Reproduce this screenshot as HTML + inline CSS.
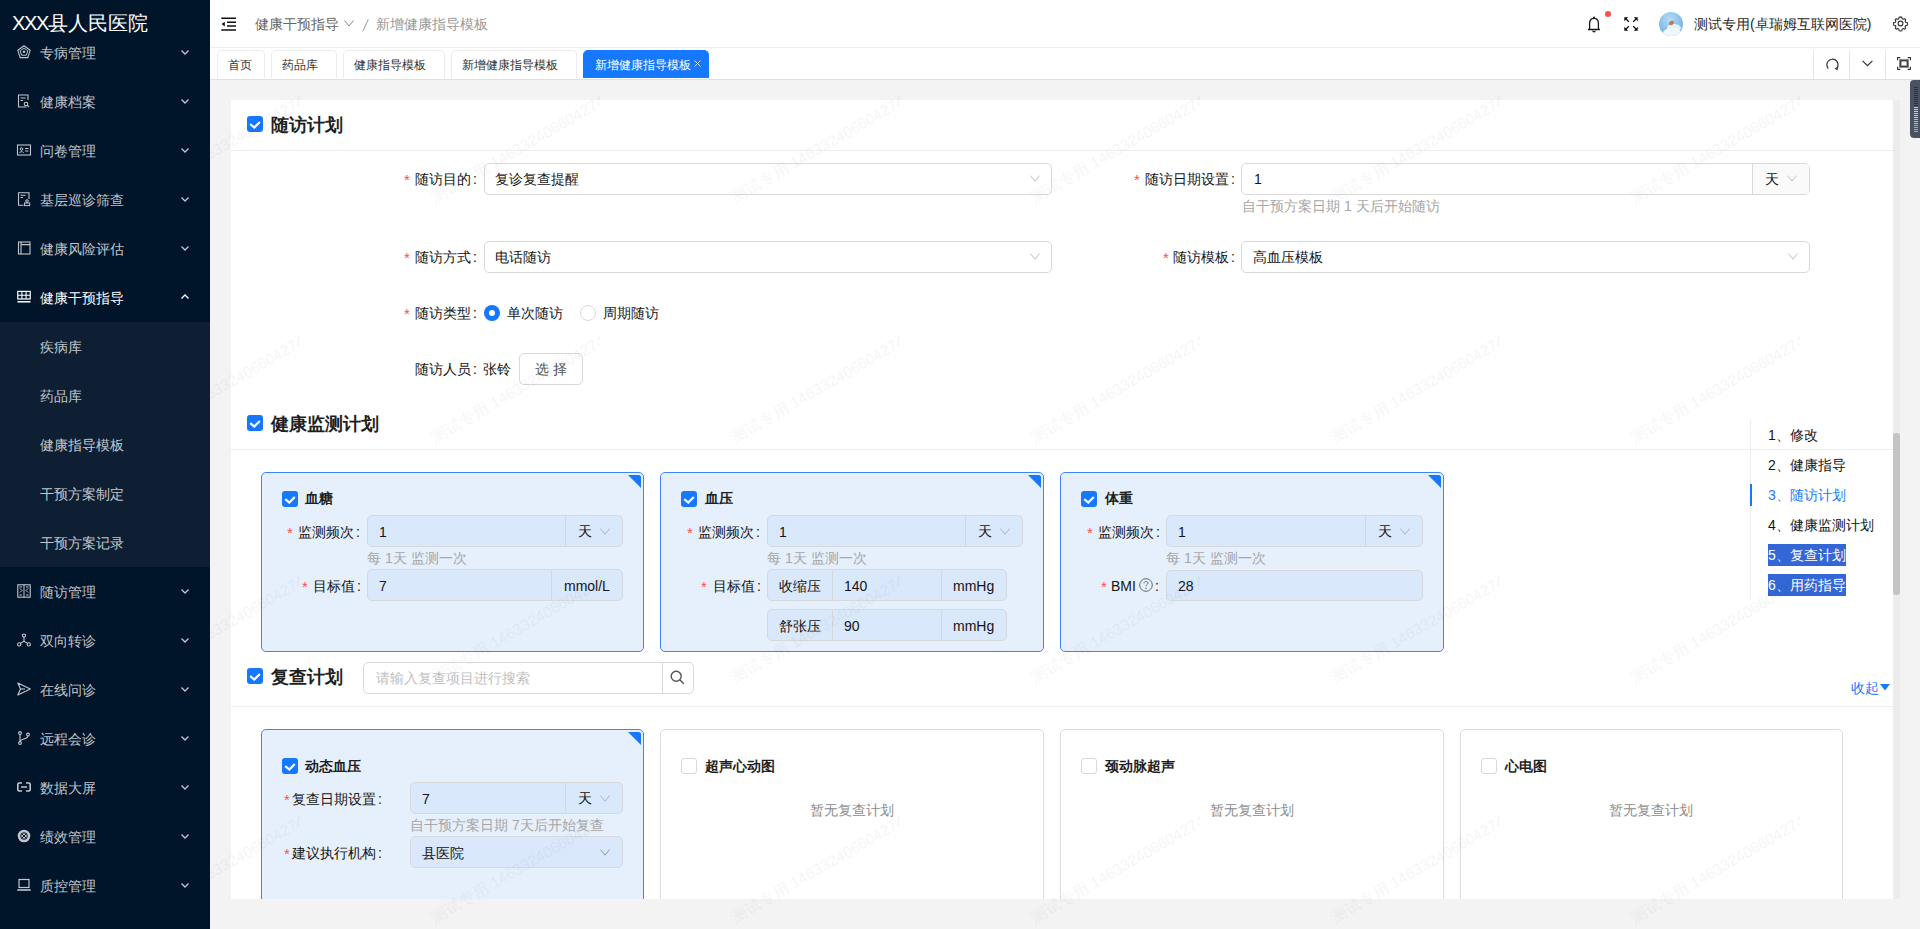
<!DOCTYPE html><html><head><meta charset="utf-8"><style>
*{box-sizing:border-box;margin:0;padding:0}
html,body{width:1920px;height:929px;overflow:hidden}
body{font-family:"Liberation Sans",sans-serif;font-size:14px;color:#262626;background:#f3f3f3;position:relative}
.a{position:absolute}
.t{position:absolute;white-space:nowrap;line-height:1}
svg{position:absolute;overflow:visible}
#side{left:0;top:0;width:210px;height:929px;background:#00142a;overflow:hidden}
.logo{left:12px;top:13px;font-size:20px;color:#fff}
.mt{position:absolute;left:40px;font-size:14px;line-height:14px;color:rgba(255,255,255,.76)}
.sub{position:absolute;left:0;top:322px;width:210px;height:245px;background:#0e1f34}
#hdr{left:210px;top:0;width:1710px;height:48px;background:#fff;border-bottom:1px solid #ececec}
#tabs{left:210px;top:48px;width:1710px;height:32px;background:#fff;border-bottom:1px solid #e0e0e0}
.tab{position:absolute;top:2px;height:28px;border:1px solid #ececec;border-bottom:none;border-radius:5px 5px 0 0;font-size:12px;color:#333;line-height:28px;text-align:center;background:#fff}
.tab.on{background:#1677ff;border-color:#1677ff;color:#fff}
#panel{left:231px;top:100px;width:1662px;height:799px;background:#fff;overflow:hidden}
.lbl{position:absolute;font-size:14px;line-height:14px;color:#141414;white-space:nowrap}
.req{color:#ff4d4f;font-family:"Liberation Sans",sans-serif;margin-right:4px}
.inp{position:absolute;height:32px;border:1px solid #d9d9d9;border-radius:5px;background:#fff}
.val{position:absolute;font-size:14px;line-height:14px;color:#141414;white-space:nowrap}
.help{position:absolute;font-size:14px;line-height:14px;color:#a6a6a6;white-space:nowrap}
.cb{position:absolute;width:16px;height:16px;border-radius:3px;background:#1677ff}
.cb.off{background:#fff;border:1px solid #d9d9d9}
.card{position:absolute;border:1.5px solid #3d84f7;border-radius:5px;background:#e6f0fd}
.card.off{border:1px solid #dcdcdc;background:#fff}
.h1{position:absolute;font-size:18px;line-height:18px;font-weight:bold;color:#1f1f1f;white-space:nowrap}
.h2{position:absolute;font-size:14px;line-height:14px;font-weight:bold;color:#1f1f1f;white-space:nowrap}
.ci{position:absolute;height:32px;border:1px solid #d6d8dc;border-radius:5px;background:#dae8fc}
.div{position:absolute;left:0;width:1662px;height:1px;background:#efefef}
</style></head><body>
<div id="side" class="a">
<div class="t logo"><span style="letter-spacing:-1.4px">XXX</span>县人民医院</div>
<div class="sub"></div>
<div class="mt" style="top:46px;color:rgba(255,255,255,.76)">专病管理</div>
<svg style="left:17px;top:45px" width="14" height="14" viewBox="0 0 14 14"><path d="M7 0.8L13.2 5.3L10.8 12.6H3.2L0.8 5.3Z" fill="none" stroke="rgba(255,255,255,.76)" stroke-width="1.1"/><path d="M7 3L10.8 5.8L9.4 10.2H4.6L3.2 5.8Z" fill="none" stroke="rgba(255,255,255,.76)" stroke-width="1"/><circle cx="7" cy="6.8" r="1.3" fill="rgba(255,255,255,.76)"/></svg>
<svg style="left:181px;top:50px" width="8" height="5" viewBox="0 0 8 5"><path d="M0.5 0.5L4 4L7.5 0.5" fill="none" stroke="rgba(255,255,255,.76)" stroke-width="1.3"/></svg>
<div class="mt" style="top:95px;color:rgba(255,255,255,.76)">健康档案</div>
<svg style="left:17px;top:94px" width="14" height="14" viewBox="0 0 14 14"><path d="M9.5 13H1.5V1H11V6" fill="none" stroke="rgba(255,255,255,.76)" stroke-width="1.1"/><path d="M3.5 4H8.5M3.5 6.5H6" stroke="rgba(255,255,255,.76)" stroke-width="1.1"/><circle cx="9" cy="10" r="1.8" fill="none" stroke="rgba(255,255,255,.76)" stroke-width="1.1"/><path d="M10.3 11.3L12 13" stroke="rgba(255,255,255,.76)" stroke-width="1.1"/></svg>
<svg style="left:181px;top:99px" width="8" height="5" viewBox="0 0 8 5"><path d="M0.5 0.5L4 4L7.5 0.5" fill="none" stroke="rgba(255,255,255,.76)" stroke-width="1.3"/></svg>
<div class="mt" style="top:144px;color:rgba(255,255,255,.76)">问卷管理</div>
<svg style="left:17px;top:143px" width="14" height="14" viewBox="0 0 14 14"><rect x="0.5" y="2" width="13" height="10" fill="none" stroke="rgba(255,255,255,.76)" stroke-width="1.1"/><circle cx="4.5" cy="6" r="1.3" fill="none" stroke="rgba(255,255,255,.76)" stroke-width="1"/><path d="M2.5 9.8C3 8.3 6 8.3 6.5 9.8M8 5.5H11.5M8 8H11.5" fill="none" stroke="rgba(255,255,255,.76)" stroke-width="1"/></svg>
<svg style="left:181px;top:148px" width="8" height="5" viewBox="0 0 8 5"><path d="M0.5 0.5L4 4L7.5 0.5" fill="none" stroke="rgba(255,255,255,.76)" stroke-width="1.3"/></svg>
<div class="mt" style="top:193px;color:rgba(255,255,255,.76)">基层巡诊筛查</div>
<svg style="left:17px;top:192px" width="14" height="14" viewBox="0 0 14 14"><path d="M6.5 13.3H1.5V0.8H12V7" fill="none" stroke="rgba(255,255,255,.76)" stroke-width="1.1"/><path d="M3.5 3.3H8.5M3.5 5.5H6" stroke="rgba(255,255,255,.76)" stroke-width="1"/><circle cx="10" cy="9" r="1.3" fill="none" stroke="rgba(255,255,255,.76)" stroke-width="1"/><rect x="7.5" y="11" width="5.2" height="2.6" fill="none" stroke="rgba(255,255,255,.76)" stroke-width="1"/></svg>
<svg style="left:181px;top:197px" width="8" height="5" viewBox="0 0 8 5"><path d="M0.5 0.5L4 4L7.5 0.5" fill="none" stroke="rgba(255,255,255,.76)" stroke-width="1.3"/></svg>
<div class="mt" style="top:242px;color:rgba(255,255,255,.76)">健康风险评估</div>
<svg style="left:17px;top:241px" width="14" height="14" viewBox="0 0 14 14"><rect x="1.5" y="1" width="11.5" height="12" fill="none" stroke="rgba(255,255,255,.76)" stroke-width="1.1"/><path d="M4 1V13M4 3.6H13" stroke="rgba(255,255,255,.76)" stroke-width="1.1"/></svg>
<svg style="left:181px;top:246px" width="8" height="5" viewBox="0 0 8 5"><path d="M0.5 0.5L4 4L7.5 0.5" fill="none" stroke="rgba(255,255,255,.76)" stroke-width="1.3"/></svg>
<div class="mt" style="top:291px;color:#fff">健康干预指导</div>
<svg style="left:17px;top:290px" width="14" height="14" viewBox="0 0 14 14"><rect x="0.8" y="1.4" width="12.4" height="7.6" fill="none" stroke="#fff" stroke-width="1.2"/><path d="M0.8 5.2H13.2M4.9 1.4V9M9.1 1.4V9" stroke="#fff" stroke-width="1.1"/><path d="M0.5 11.8H13.5" stroke="#fff" stroke-width="1.5"/></svg>
<svg style="left:181px;top:294px" width="8" height="5" viewBox="0 0 8 5"><path d="M0.5 4.5L4 1L7.5 4.5" fill="none" stroke="#fff" stroke-width="1.3"/></svg>
<div class="mt" style="top:340px">疾病库</div>
<div class="mt" style="top:389px">药品库</div>
<div class="mt" style="top:438px">健康指导模板</div>
<div class="mt" style="top:487px">干预方案制定</div>
<div class="mt" style="top:536px">干预方案记录</div>
<div class="mt" style="top:585px;color:rgba(255,255,255,.76)">随访管理</div>
<svg style="left:17px;top:584px" width="14" height="14" viewBox="0 0 14 14"><rect x="0.8" y="0.8" width="12.4" height="12.4" fill="none" stroke="rgba(255,255,255,.76)" stroke-width="1.1"/><path d="M7 0.8V13.2M3 4.5L5 6.5L3 8.5M11 4.5L9 6.5L11 8.5M2.5 3H5M9 3H11.5M2.5 11H5M9 11H11.5" fill="none" stroke="rgba(255,255,255,.76)" stroke-width="1"/></svg>
<svg style="left:181px;top:589px" width="8" height="5" viewBox="0 0 8 5"><path d="M0.5 0.5L4 4L7.5 0.5" fill="none" stroke="rgba(255,255,255,.76)" stroke-width="1.3"/></svg>
<div class="mt" style="top:634px;color:rgba(255,255,255,.76)">双向转诊</div>
<svg style="left:17px;top:633px" width="14" height="14" viewBox="0 0 14 14"><circle cx="7" cy="2.6" r="1.6" fill="none" stroke="rgba(255,255,255,.76)" stroke-width="1.1"/><circle cx="2.2" cy="11.4" r="1.6" fill="none" stroke="rgba(255,255,255,.76)" stroke-width="1.1"/><circle cx="11.8" cy="11.4" r="1.6" fill="none" stroke="rgba(255,255,255,.76)" stroke-width="1.1"/><path d="M7 4.2V8.2M7 8.2L3.4 10.4M7 8.2L10.6 10.4" fill="none" stroke="rgba(255,255,255,.76)" stroke-width="1.1"/></svg>
<svg style="left:181px;top:638px" width="8" height="5" viewBox="0 0 8 5"><path d="M0.5 0.5L4 4L7.5 0.5" fill="none" stroke="rgba(255,255,255,.76)" stroke-width="1.3"/></svg>
<div class="mt" style="top:683px;color:rgba(255,255,255,.76)">在线问诊</div>
<svg style="left:17px;top:682px" width="14" height="14" viewBox="0 0 14 14"><path d="M0.8 1L13.3 7L0.8 13L3.5 7Z" fill="none" stroke="rgba(255,255,255,.76)" stroke-width="1.1" stroke-linejoin="round"/><path d="M3.5 7H8" stroke="rgba(255,255,255,.76)" stroke-width="1.1"/></svg>
<svg style="left:181px;top:687px" width="8" height="5" viewBox="0 0 8 5"><path d="M0.5 0.5L4 4L7.5 0.5" fill="none" stroke="rgba(255,255,255,.76)" stroke-width="1.3"/></svg>
<div class="mt" style="top:732px;color:rgba(255,255,255,.76)">远程会诊</div>
<svg style="left:17px;top:731px" width="14" height="14" viewBox="0 0 14 14"><circle cx="3" cy="2" r="1.4" fill="none" stroke="rgba(255,255,255,.76)" stroke-width="1.1"/><circle cx="3" cy="12" r="1.4" fill="none" stroke="rgba(255,255,255,.76)" stroke-width="1.1"/><circle cx="11" cy="3.5" r="1.4" fill="none" stroke="rgba(255,255,255,.76)" stroke-width="1.1"/><path d="M3 3.4V10.6M11 4.9C11 8.5 3 7.5 3 10.6" fill="none" stroke="rgba(255,255,255,.76)" stroke-width="1.1"/></svg>
<svg style="left:181px;top:736px" width="8" height="5" viewBox="0 0 8 5"><path d="M0.5 0.5L4 4L7.5 0.5" fill="none" stroke="rgba(255,255,255,.76)" stroke-width="1.3"/></svg>
<div class="mt" style="top:781px;color:rgba(255,255,255,.76)">数据大屏</div>
<svg style="left:17px;top:780px" width="14" height="14" viewBox="0 0 14 14"><path d="M5 3H2.2C1.4 3 0.8 3.6 0.8 4.4V9.6C0.8 10.4 1.4 11 2.2 11H5M9 3H11.8C12.6 3 13.2 3.6 13.2 4.4V9.6C13.2 10.4 12.6 11 11.8 11H9M4 7H10" fill="none" stroke="rgba(255,255,255,.76)" stroke-width="1.6"/></svg>
<svg style="left:181px;top:785px" width="8" height="5" viewBox="0 0 8 5"><path d="M0.5 0.5L4 4L7.5 0.5" fill="none" stroke="rgba(255,255,255,.76)" stroke-width="1.3"/></svg>
<div class="mt" style="top:830px;color:rgba(255,255,255,.76)">绩效管理</div>
<svg style="left:17px;top:829px" width="14" height="14" viewBox="0 0 14 14"><circle cx="7" cy="7" r="6.3" fill="rgba(255,255,255,.76)"/><circle cx="7" cy="7" r="3.3" fill="none" stroke="#00142a" stroke-width="1"/><path d="M4.8 4.8L9.2 9.2M9.2 4.8L4.8 9.2" stroke="#00142a" stroke-width="1"/></svg>
<svg style="left:181px;top:834px" width="8" height="5" viewBox="0 0 8 5"><path d="M0.5 0.5L4 4L7.5 0.5" fill="none" stroke="rgba(255,255,255,.76)" stroke-width="1.3"/></svg>
<div class="mt" style="top:879px;color:rgba(255,255,255,.76)">质控管理</div>
<svg style="left:17px;top:878px" width="14" height="14" viewBox="0 0 14 14"><rect x="2" y="1.5" width="10" height="8" fill="none" stroke="rgba(255,255,255,.76)" stroke-width="1.2"/><path d="M0.3 12H13.7" stroke="rgba(255,255,255,.76)" stroke-width="1.6"/></svg>
<svg style="left:181px;top:883px" width="8" height="5" viewBox="0 0 8 5"><path d="M0.5 0.5L4 4L7.5 0.5" fill="none" stroke="rgba(255,255,255,.76)" stroke-width="1.3"/></svg>
</div>
<div id="hdr" class="a">
<svg style="left:11px;top:17px" width="15" height="14" viewBox="0 0 15 14"><path d="M0.3 1.3H15M6 5.3H15M6 8.9H15M0.3 12.9H15" stroke="#111" stroke-width="1.5"/><path d="M0.6 7.1L3.8 4.7V9.5Z" fill="#111"/></svg>
<div class="t" style="left:45px;top:17px;color:#666">健康干预指导</div>
<svg style="left:134px;top:20px" width="10" height="7" viewBox="0 0 10 7"><path d="M0.5 0.5L5 6L9.5 0.5" fill="none" stroke="#888" stroke-width="1"/></svg>
<svg style="left:152px;top:19px" width="7" height="13" viewBox="0 0 7 13"><path d="M0.8 12.3L6.3 0.3" stroke="#999" stroke-width="1"/></svg>
<div class="t" style="left:166px;top:17px;color:#999">新增健康指导模板</div>
<svg style="left:1376px;top:15px" width="16" height="18" viewBox="0 0 16 18"><path d="M3.6 14.4V8.6C3.6 5.4 5.5 3.4 8 3.4C10.5 3.4 12.4 5.4 12.4 8.6V14.4" fill="none" stroke="#1a1a1a" stroke-width="1.3"/><path d="M2 14.5H14" stroke="#1a1a1a" stroke-width="1.5"/><circle cx="8" cy="2.4" r="1" fill="#1a1a1a"/><path d="M6.7 15.6A1.3 1.3 0 0 0 9.3 15.6" fill="none" stroke="#1a1a1a" stroke-width="1.1"/></svg>
<div class="a" style="left:1395px;top:11px;width:6px;height:6px;border-radius:3px;background:#ff4d4f"></div>
<svg style="left:1414px;top:17px" width="14" height="14" viewBox="0 0 14 14"><path d="M1.5 1.5L4.8 4.8M12.5 1.5L9.2 4.8M1.5 12.5L4.8 9.2M12.5 12.5L9.2 9.2" stroke="#111" stroke-width="1.3"/><path d="M0.3 0.3H4.3L0.3 4.3ZM13.7 0.3H9.7L13.7 4.3ZM0.3 13.7H4.3L0.3 9.7ZM13.7 13.7H9.7L13.7 9.7Z" fill="#111"/></svg>
<div class="a" style="left:1449px;top:12px;width:24px;height:24px;border-radius:12px;overflow:hidden;background:radial-gradient(circle at 45% 30%,#b9dcf3 0,#8cc3ea 45%,#5ea6dd 100%)"><div class="a" style="left:8px;top:12px;width:14px;height:8px;border-radius:50%;background:#e6f3fb"></div><div class="a" style="left:4px;top:16px;width:18px;height:10px;border-radius:50%;background:#f0f8fd"></div><div class="a" style="left:10px;top:9px;width:5px;height:4px;background:#c07a50;border-radius:2px;transform:rotate(-25deg)"></div></div>
<div class="t" style="left:1484px;top:17px;color:#262626">测试专用(卓瑞姆互联网医院)</div>
<svg style="left:1683px;top:16px" width="15" height="15" viewBox="0 0 24 24"><path d="M12 1.5l2.1 0.3 0.6 2.6 1.6 0.9 2.5-0.9 1.5 1.5-0.9 2.5 0.9 1.6 2.6 0.6 0.3 2.1-0.3 2.1-2.6 0.6-0.9 1.6 0.9 2.5-1.5 1.5-2.5-0.9-1.6 0.9-0.6 2.6-2.1 0.3-2.1-0.3-0.6-2.6-1.6-0.9-2.5 0.9-1.5-1.5 0.9-2.5-0.9-1.6-2.6-0.6-0.3-2.1 0.3-2.1 2.6-0.6 0.9-1.6-0.9-2.5 1.5-1.5 2.5 0.9 1.6-0.9 0.6-2.6z" fill="none" stroke="#333" stroke-width="1.8" stroke-linejoin="round"/><circle cx="12" cy="12" r="3.8" fill="none" stroke="#333" stroke-width="1.8"/></svg>
</div>
<div id="tabs" class="a">
<div class="tab" style="left:7px;width:48px;text-align:left;padding-left:10px">首页</div>
<div class="tab" style="left:61px;width:66px;text-align:left;padding-left:10px">药品库</div>
<div class="tab" style="left:133px;width:102px;text-align:left;padding-left:10px">健康指导模板</div>
<div class="tab" style="left:241px;width:126px;text-align:left;padding-left:10px">新增健康指导模板</div>
<div class="tab on" style="left:373px;width:126px;text-align:left;padding-left:11px">新增健康指导模板</div>
<svg style="left:484px;top:12px" width="7" height="7" viewBox="0 0 7 7"><path d="M0.5 0.5L6.5 6.5M6.5 0.5L0.5 6.5" stroke="rgba(255,255,255,.85)" stroke-width="0.9"/></svg>
<div class="a" style="left:1603px;top:2px;width:1px;height:29px;background:#e6e6e6"></div>
<div class="a" style="left:1639px;top:2px;width:1px;height:29px;background:#e6e6e6"></div>
<div class="a" style="left:1675px;top:2px;width:1px;height:29px;background:#e6e6e6"></div>
<svg style="left:1616px;top:10px" width="13" height="13" viewBox="0 0 13 13"><path d="M2.3 10.6A5.6 5.6 0 1 1 10.9 10.2" fill="none" stroke="#333" stroke-width="1.2"/><path d="M8.6 10.6L11.8 12.4L11.6 8.8Z" fill="#333"/></svg>
<svg style="left:1652px;top:12px" width="11" height="7" viewBox="0 0 11 7"><path d="M0.6 0.8L5.5 5.7L10.4 0.8" fill="none" stroke="#333" stroke-width="1.2"/></svg>
<svg style="left:1687px;top:9px" width="14" height="13" viewBox="0 0 14 13"><path d="M0.6 3.3V0.6H3.3M10.7 0.6H13.4V3.3M13.4 9.7V12.4H10.7M3.3 12.4H0.6V9.7" fill="none" stroke="#333" stroke-width="1.1"/><rect x="3.4" y="3.4" width="7.2" height="6.2" fill="none" stroke="#444" stroke-width="2.1"/></svg>
</div>
<div id="panel" class="a">
<div class="cb" style="left:16px;top:16px"></div>
<svg style="left:16px;top:16px" width="16" height="16" viewBox="0 0 16 16"><path d="M3.2 8.2L7.3 11.6L12.8 5.9" fill="none" stroke="#fff" stroke-width="2.2"/></svg>
<div class="h1" style="left:40px;top:16px;">随访计划</div>
<div class="div" style="top:50px"></div>
<div class="lbl" style="left:173px;top:73px;color:#ff4d4f;font-size:15px">*</div>
<div class="lbl" style="left:184px;top:72px">随访目的<span style="margin-left:2px">:</span></div>
<div class="inp" style="left:253px;top:63px;width:568px;height:32px;"></div>
<div class="val" style="left:264px;top:72px;">复诊复查提醒</div>
<svg style="left:799px;top:75px" width="10" height="7" viewBox="0 0 10 7"><path d="M0.5 0.6L5 6.2L9.5 0.6" fill="none" stroke="#bfbfbf" stroke-width="1"/></svg>
<div class="lbl" style="left:903px;top:73px;color:#ff4d4f;font-size:15px">*</div>
<div class="lbl" style="left:914px;top:72px">随访日期设置<span style="margin-left:2px">:</span></div>
<div class="inp" style="left:1010px;top:63px;width:569px;height:32px;"></div>
<div class="a" style="left:1521px;top:64px;width:1px;height:30px;background:#d9d9d9"></div>
<div class="a" style="left:1522px;top:64px;width:56px;height:30px;background:#fafafa;border-radius:0 3px 3px 0"></div>
<div class="val" style="left:1023px;top:72px;">1</div>
<div class="val" style="left:1534px;top:72px;">天</div>
<svg style="left:1556px;top:75px" width="10" height="7" viewBox="0 0 10 7"><path d="M0.5 0.6L5 6.2L9.5 0.6" fill="none" stroke="#bfbfbf" stroke-width="1"/></svg>
<div class="help" style="left:1011px;top:99px;">自干预方案日期 1 天后开始随访</div>
<div class="lbl" style="left:173px;top:151px;color:#ff4d4f;font-size:15px">*</div>
<div class="lbl" style="left:184px;top:150px">随访方式<span style="margin-left:2px">:</span></div>
<div class="inp" style="left:253px;top:141px;width:568px;height:32px;"></div>
<div class="val" style="left:264px;top:150px;">电话随访</div>
<svg style="left:799px;top:153px" width="10" height="7" viewBox="0 0 10 7"><path d="M0.5 0.6L5 6.2L9.5 0.6" fill="none" stroke="#bfbfbf" stroke-width="1"/></svg>
<div class="lbl" style="left:932px;top:151px;color:#ff4d4f;font-size:15px">*</div>
<div class="lbl" style="left:942px;top:150px">随访模板<span style="margin-left:2px">:</span></div>
<div class="inp" style="left:1010px;top:141px;width:569px;height:32px;"></div>
<div class="val" style="left:1022px;top:150px;">高血压模板</div>
<svg style="left:1557px;top:153px" width="10" height="7" viewBox="0 0 10 7"><path d="M0.5 0.6L5 6.2L9.5 0.6" fill="none" stroke="#bfbfbf" stroke-width="1"/></svg>
<div class="lbl" style="left:173px;top:207px;color:#ff4d4f;font-size:15px">*</div>
<div class="lbl" style="left:184px;top:206px">随访类型<span style="margin-left:2px">:</span></div>
<div class="a" style="left:253px;top:205px;width:16px;height:16px;border-radius:8px;background:#1677ff"></div>
<div class="a" style="left:258px;top:210px;width:6px;height:6px;border-radius:3px;background:#fff"></div>
<div class="val" style="left:276px;top:206px;">单次随访</div>
<div class="a" style="left:349px;top:205px;width:16px;height:16px;border-radius:8px;border:1px solid #d9d9d9;background:#fff"></div>
<div class="val" style="left:372px;top:206px;">周期随访</div>
<div class="lbl" style="left:184px;top:262px">随访人员<span style="margin-left:2px">:</span></div>
<div class="val" style="left:252px;top:262px;">张铃</div>
<div class="inp" style="left:288px;top:253px;width:64px;height:32px;"></div>
<div class="val" style="left:304px;top:262px;color:#555">选 择</div>
<div class="cb" style="left:16px;top:315px"></div>
<svg style="left:16px;top:315px" width="16" height="16" viewBox="0 0 16 16"><path d="M3.2 8.2L7.3 11.6L12.8 5.9" fill="none" stroke="#fff" stroke-width="2.2"/></svg>
<div class="h1" style="left:40px;top:315px;">健康监测计划</div>
<div class="div" style="top:349px"></div>
<div class="card" style="left:30px;top:372px;width:383px;height:180px;"></div>
<svg style="left:397px;top:375px" width="13" height="13" viewBox="0 0 13 13"><path d="M0 0H10.5Q13 0 13 2.5V13Z" fill="#1677ff"/></svg>
<div class="cb" style="left:51px;top:391px"></div>
<svg style="left:51px;top:391px" width="16" height="16" viewBox="0 0 16 16"><path d="M3.2 8.2L7.3 11.6L12.8 5.9" fill="none" stroke="#fff" stroke-width="2.2"/></svg>
<div class="h2" style="left:74px;top:391px;">血糖</div>
<div class="lbl" style="left:56px;top:426px;color:#ff4d4f;font-size:15px">*</div>
<div class="lbl" style="left:67px;top:425px">监测频次<span style="margin-left:2px">:</span></div>
<div class="ci" style="left:136px;top:415px;width:256px;height:32px;"></div>
<div class="a" style="left:334px;top:416px;width:1px;height:30px;background:#d6d8dc"></div>
<div class="val" style="left:148px;top:425px;">1</div>
<div class="val" style="left:347px;top:424px;">天</div>
<svg style="left:369px;top:428px" width="10" height="7" viewBox="0 0 10 7"><path d="M0.5 0.6L5 6.2L9.5 0.6" fill="none" stroke="#a8b4c4" stroke-width="1"/></svg>
<div class="help" style="left:136px;top:451px;">每 1天 监测一次</div>
<div class="lbl" style="left:71px;top:480px;color:#ff4d4f;font-size:15px">*</div>
<div class="lbl" style="left:82px;top:479px">目标值<span style="margin-left:2px">:</span></div>
<div class="ci" style="left:136px;top:469px;width:256px;height:32px;"></div>
<div class="a" style="left:320px;top:470px;width:1px;height:30px;background:#d6d8dc"></div>
<div class="val" style="left:148px;top:479px;">7</div>
<div class="val" style="left:333px;top:479px;">mmol/L</div>
<div class="card" style="left:429px;top:372px;width:384px;height:180px;"></div>
<svg style="left:797px;top:375px" width="13" height="13" viewBox="0 0 13 13"><path d="M0 0H10.5Q13 0 13 2.5V13Z" fill="#1677ff"/></svg>
<div class="cb" style="left:450px;top:391px"></div>
<svg style="left:450px;top:391px" width="16" height="16" viewBox="0 0 16 16"><path d="M3.2 8.2L7.3 11.6L12.8 5.9" fill="none" stroke="#fff" stroke-width="2.2"/></svg>
<div class="h2" style="left:474px;top:391px;">血压</div>
<div class="lbl" style="left:456px;top:426px;color:#ff4d4f;font-size:15px">*</div>
<div class="lbl" style="left:467px;top:425px">监测频次<span style="margin-left:2px">:</span></div>
<div class="ci" style="left:536px;top:415px;width:256px;height:32px;"></div>
<div class="a" style="left:734px;top:416px;width:1px;height:30px;background:#d6d8dc"></div>
<div class="val" style="left:548px;top:425px;">1</div>
<div class="val" style="left:747px;top:424px;">天</div>
<svg style="left:769px;top:428px" width="10" height="7" viewBox="0 0 10 7"><path d="M0.5 0.6L5 6.2L9.5 0.6" fill="none" stroke="#a8b4c4" stroke-width="1"/></svg>
<div class="help" style="left:536px;top:451px;">每 1天 监测一次</div>
<div class="lbl" style="left:470px;top:480px;color:#ff4d4f;font-size:15px">*</div>
<div class="lbl" style="left:482px;top:479px">目标值<span style="margin-left:2px">:</span></div>
<div class="ci" style="left:536px;top:469px;width:240px;height:32px;"></div>
<div class="a" style="left:601px;top:470px;width:1px;height:30px;background:#d6d8dc"></div>
<div class="a" style="left:710px;top:470px;width:1px;height:30px;background:#d6d8dc"></div>
<div class="val" style="left:548px;top:479px;">收缩压</div>
<div class="val" style="left:613px;top:479px;">140</div>
<div class="val" style="left:722px;top:479px;">mmHg</div>
<div class="ci" style="left:536px;top:509px;width:240px;height:32px;"></div>
<div class="a" style="left:601px;top:510px;width:1px;height:30px;background:#d6d8dc"></div>
<div class="a" style="left:710px;top:510px;width:1px;height:30px;background:#d6d8dc"></div>
<div class="val" style="left:548px;top:519px;">舒张压</div>
<div class="val" style="left:613px;top:519px;">90</div>
<div class="val" style="left:722px;top:519px;">mmHg</div>
<div class="card" style="left:829px;top:372px;width:384px;height:180px;"></div>
<svg style="left:1197px;top:375px" width="13" height="13" viewBox="0 0 13 13"><path d="M0 0H10.5Q13 0 13 2.5V13Z" fill="#1677ff"/></svg>
<div class="cb" style="left:850px;top:391px"></div>
<svg style="left:850px;top:391px" width="16" height="16" viewBox="0 0 16 16"><path d="M3.2 8.2L7.3 11.6L12.8 5.9" fill="none" stroke="#fff" stroke-width="2.2"/></svg>
<div class="h2" style="left:874px;top:391px;">体重</div>
<div class="lbl" style="left:856px;top:426px;color:#ff4d4f;font-size:15px">*</div>
<div class="lbl" style="left:867px;top:425px">监测频次<span style="margin-left:2px">:</span></div>
<div class="ci" style="left:935px;top:415px;width:257px;height:32px;"></div>
<div class="a" style="left:1134px;top:416px;width:1px;height:30px;background:#d6d8dc"></div>
<div class="val" style="left:947px;top:425px;">1</div>
<div class="val" style="left:1147px;top:424px;">天</div>
<svg style="left:1169px;top:428px" width="10" height="7" viewBox="0 0 10 7"><path d="M0.5 0.6L5 6.2L9.5 0.6" fill="none" stroke="#a8b4c4" stroke-width="1"/></svg>
<div class="help" style="left:935px;top:451px;">每 1天 监测一次</div>
<div class="lbl" style="left:870px;top:480px;color:#ff4d4f;font-size:15px">*</div>
<div class="lbl" style="left:880px;top:479px">BMI</div>
<svg style="left:908px;top:478px" width="14" height="14" viewBox="0 0 14 14"><circle cx="7" cy="7" r="6.3" fill="none" stroke="#666" stroke-width="1"/><path d="M5 5.3C5 4 6 3.5 7 3.5C8 3.5 9 4.1 9 5.2C9 6.5 7 6.6 7 8.2" fill="none" stroke="#666" stroke-width="1"/><circle cx="7" cy="10.3" r="0.7" fill="#666"/></svg>
<div class="lbl" style="left:924px;top:479px;">:</div>
<div class="ci" style="left:935px;top:470px;width:257px;height:31px;"></div>
<div class="val" style="left:947px;top:479px;">28</div>
<div class="a" style="left:1519px;top:320px;width:1px;height:180px;background:#eeeeee"></div>
<div class="a" style="left:1519px;top:384px;width:2px;height:22px;background:#1677ff"></div>
<div class="val" style="left:1537px;top:328px;">1、修改</div>
<div class="val" style="left:1537px;top:358px;">2、健康指导</div>
<div class="val" style="left:1537px;top:388px;color:#1677ff">3、随访计划</div>
<div class="val" style="left:1537px;top:418px;">4、健康监测计划</div>
<div class="a" style="left:1537px;top:444px;width:78px;height:22px;background:#3367d6"></div>
<div class="val" style="left:1537px;top:448px;color:#fff">5、复查计划</div>
<div class="a" style="left:1537px;top:474px;width:78px;height:22px;background:#3367d6"></div>
<div class="val" style="left:1537px;top:478px;color:#fff">6、用药指导</div>
<div class="val" style="left:1620px;top:581px;color:#1677ff">收起</div>
<svg style="left:1649px;top:584px" width="10" height="7" viewBox="0 0 10 7"><path d="M0 0H10L5 6.5Z" fill="#1677ff"/></svg>
<div class="cb" style="left:16px;top:568px"></div>
<svg style="left:16px;top:568px" width="16" height="16" viewBox="0 0 16 16"><path d="M3.2 8.2L7.3 11.6L12.8 5.9" fill="none" stroke="#fff" stroke-width="2.2"/></svg>
<div class="h1" style="left:40px;top:568px;">复查计划</div>
<div class="inp" style="left:132px;top:562px;width:331px;height:32px;"></div>
<div class="a" style="left:431px;top:563px;width:1px;height:30px;background:#d9d9d9"></div>
<div class="help" style="left:145px;top:571px;color:#bfbfbf">请输入复查项目进行搜索</div>
<svg style="left:439px;top:570px" width="15" height="15" viewBox="0 0 15 15"><circle cx="6.2" cy="6.2" r="5" fill="none" stroke="#555" stroke-width="1.4"/><path d="M9.8 9.8L13.8 13.8" stroke="#555" stroke-width="1.5"/></svg>
<div class="div" style="top:606px"></div>
<div class="card" style="left:30px;top:629px;width:383px;height:231px;"></div>
<svg style="left:397px;top:632px" width="13" height="13" viewBox="0 0 13 13"><path d="M0 0H10.5Q13 0 13 2.5V13Z" fill="#1677ff"/></svg>
<div class="cb" style="left:51px;top:658px"></div>
<svg style="left:51px;top:658px" width="16" height="16" viewBox="0 0 16 16"><path d="M3.2 8.2L7.3 11.6L12.8 5.9" fill="none" stroke="#fff" stroke-width="2.2"/></svg>
<div class="h2" style="left:74px;top:659px;">动态血压</div>
<div class="lbl" style="left:53px;top:693px;color:#ff4d4f;font-size:15px">*</div>
<div class="lbl" style="left:61px;top:692px">复查日期设置<span style="margin-left:2px">:</span></div>
<div class="ci" style="left:179px;top:682px;width:213px;height:32px;"></div>
<div class="a" style="left:334px;top:683px;width:1px;height:30px;background:#d6d8dc"></div>
<div class="val" style="left:191px;top:692px;">7</div>
<div class="val" style="left:347px;top:691px;">天</div>
<svg style="left:369px;top:695px" width="10" height="7" viewBox="0 0 10 7"><path d="M0.5 0.6L5 6.2L9.5 0.6" fill="none" stroke="#a8b4c4" stroke-width="1"/></svg>
<div class="help" style="left:179px;top:718px;">自干预方案日期 7天后开始复查</div>
<div class="lbl" style="left:53px;top:747px;color:#ff4d4f;font-size:15px">*</div>
<div class="lbl" style="left:61px;top:746px">建议执行机构<span style="margin-left:2px">:</span></div>
<div class="ci" style="left:179px;top:736px;width:213px;height:32px;"></div>
<div class="val" style="left:191px;top:746px;">县医院</div>
<svg style="left:369px;top:749px" width="10" height="7" viewBox="0 0 10 7"><path d="M0.5 0.6L5 6.2L9.5 0.6" fill="none" stroke="#8a96a6" stroke-width="1"/></svg>
<div class="card off" style="left:429px;top:629px;width:384px;height:231px;"></div>
<div class="cb off" style="left:450px;top:658px"></div>
<div class="h2" style="left:474px;top:659px;">超声心动图</div>
<div class="help" style="left:579px;top:703px;color:#8c8c8c">暂无复查计划</div>
<div class="card off" style="left:829px;top:629px;width:384px;height:231px;"></div>
<div class="cb off" style="left:850px;top:658px"></div>
<div class="h2" style="left:874px;top:659px;">颈动脉超声</div>
<div class="help" style="left:979px;top:703px;color:#8c8c8c">暂无复查计划</div>
<div class="card off" style="left:1229px;top:629px;width:383px;height:231px;"></div>
<div class="cb off" style="left:1250px;top:658px"></div>
<div class="h2" style="left:1274px;top:659px;">心电图</div>
<div class="help" style="left:1378px;top:703px;color:#8c8c8c">暂无复查计划</div>
</div>
<div class="a" style="left:1893px;top:100px;width:7px;height:799px;background:#ececec"></div>
<div class="a" style="left:1893px;top:433px;width:7px;height:162px;border-radius:3px;background:#c4c4c4"></div>
<div class="a" style="left:1910px;top:80px;width:14px;height:58px;border-radius:4px;background:#4a5160"></div>
<div class="a" style="left:1914px;top:87px;width:4px;height:1px;background:#2c3039"></div><div class="a" style="left:1914px;top:89px;width:4px;height:1px;background:#2c3039"></div><div class="a" style="left:1914px;top:91px;width:4px;height:1px;background:#2c3039"></div><div class="a" style="left:1914px;top:93px;width:4px;height:1px;background:#2c3039"></div><div class="a" style="left:1914px;top:95px;width:4px;height:1px;background:#2c3039"></div><div class="a" style="left:1914px;top:97px;width:4px;height:1px;background:#2c3039"></div><div class="a" style="left:1914px;top:99px;width:4px;height:1px;background:#2c3039"></div><div class="a" style="left:1914px;top:101px;width:4px;height:1px;background:#2c3039"></div><div class="a" style="left:1914px;top:103px;width:4px;height:1px;background:#2c3039"></div><div class="a" style="left:1914px;top:105px;width:4px;height:1px;background:#2c3039"></div><div class="a" style="left:1914px;top:107px;width:4px;height:1px;background:#d9dc5e"></div><div class="a" style="left:1914px;top:109px;width:4px;height:1px;background:#d9dc5e"></div><div class="a" style="left:1914px;top:111px;width:4px;height:1px;background:#d9dc5e"></div><div class="a" style="left:1914px;top:113px;width:4px;height:1px;background:#d9dc5e"></div><div class="a" style="left:1914px;top:115px;width:4px;height:1px;background:#d9dc5e"></div><div class="a" style="left:1914px;top:117px;width:4px;height:1px;background:#d9dc5e"></div><div class="a" style="left:1914px;top:119px;width:4px;height:1px;background:#a9d86a"></div><div class="a" style="left:1914px;top:121px;width:4px;height:1px;background:#a9d86a"></div><div class="a" style="left:1914px;top:123px;width:4px;height:1px;background:#a9d86a"></div><div class="a" style="left:1914px;top:125px;width:4px;height:1px;background:#4fd6b8"></div><div class="a" style="left:1914px;top:127px;width:4px;height:1px;background:#4fd6b8"></div><div class="a" style="left:1914px;top:129px;width:4px;height:1px;background:#4fd6b8"></div><div class="a" style="left:1914px;top:131px;width:4px;height:1px;background:#4fd6b8"></div>
<svg style="left:210px;top:48px" width="1710" height="881" viewBox="210 48 1710 881"><defs><pattern id="wm" x="0" y="0" width="300" height="240" patternUnits="userSpaceOnUse"><text x="135" y="203" transform="rotate(-30 135 203)" font-family="Liberation Sans" font-size="15.5" fill="rgba(0,0,0,0.04)">测试专用 146332406604274</text></pattern></defs><rect x="210" y="48" width="1710" height="881" fill="url(#wm)"/></svg>
</body></html>
